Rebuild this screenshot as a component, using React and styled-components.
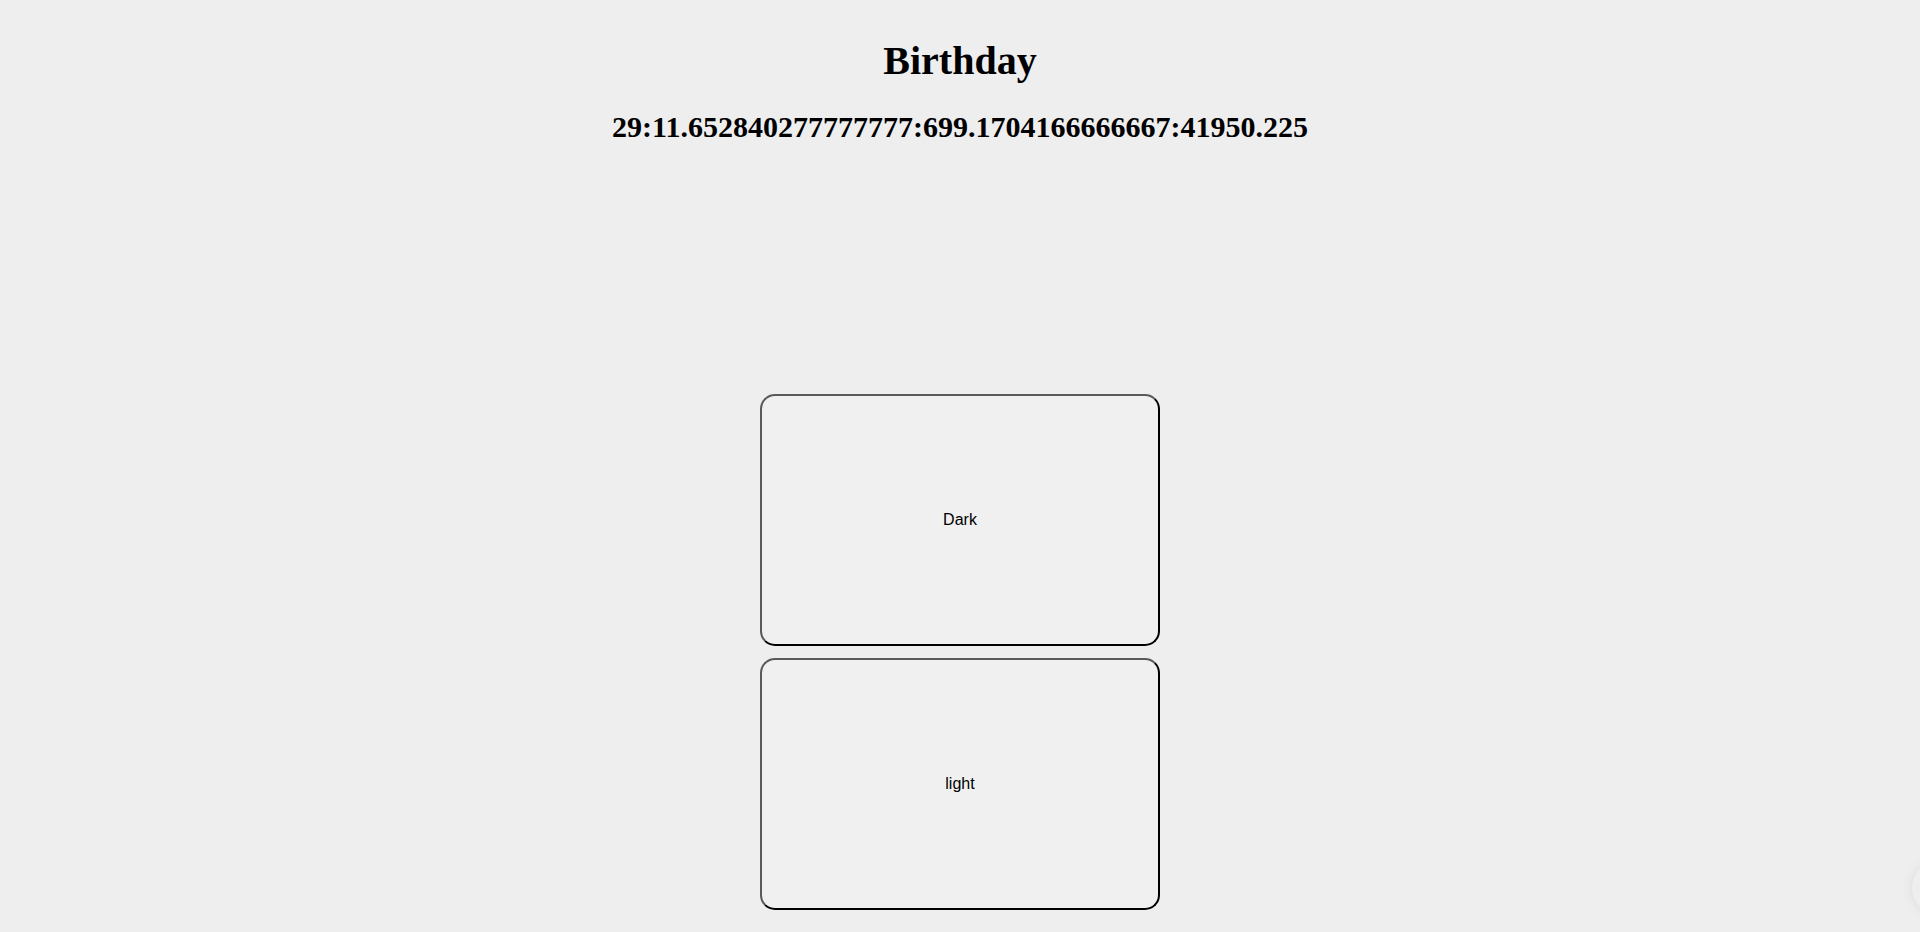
import React from 'react';
import styled, { createGlobalStyle } from 'styled-components';

const GlobalStyle = createGlobalStyle`
  body {
    margin: 0;
    background: #eeeeee;
    font-family: "Liberation Serif", "Times New Roman", serif;
  }
`;

const App = () => {
  return (
    <>
      <GlobalStyle />
      <Page>
        <Titulo>Birthday</Titulo>
        <Contador>29:11.652840277777777:699.1704166666667:41950.225</Contador>
        <Botones>
          <Boton>Dark</Boton>
          <Boton>light</Boton>
        </Botones>
      </Page>
      <Burbuja />
    </>
  );
};

export default App;

const Page = styled.div`
  display: flex;
  flex-direction: column;
  align-items: center;
  padding-top: 37px;
`;

const Titulo = styled.h1`
  font-size: 40px;
  font-weight: bold;
  color: #000;
  margin: 0 0 26px 0;
`;

const Contador = styled.h2`
  font-size: 30px;
  font-weight: bold;
  color: #000;
  margin: 0;
`;

const Botones = styled.div`
  display: flex;
  flex-direction: column;
  gap: 12px;
  margin-top: 250px;
`;

const Boton = styled.button`
  width: 400px;
  height: 252px;
  box-sizing: border-box;
  background: #f0f0f0;
  border: 2px solid;
  border-top-color: #5a5a5a;
  border-left-color: #5a5a5a;
  border-bottom-color: #000;
  border-right-color: #000;
  border-radius: 15px;
  font-family: "Liberation Sans", Arial, sans-serif;
  font-size: 16px;
  color: #000;
  cursor: pointer;
`;

const Burbuja = styled.div`
  position: fixed;
  right: -44px;
  bottom: 18px;
  width: 52px;
  height: 52px;
  border-radius: 50%;
  background: #eeeeee;
  box-shadow: 0 0 12px rgba(0, 0, 0, 0.08);
`;
